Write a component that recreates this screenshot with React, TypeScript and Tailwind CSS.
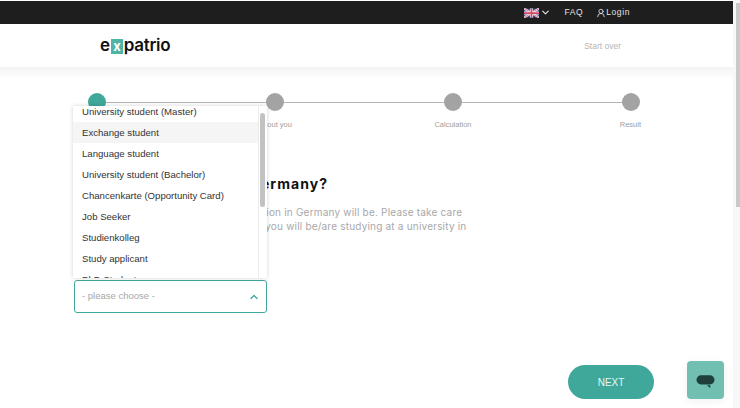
import React from 'react';
import { ChevronDown, ChevronUp, UserRound } from 'lucide-react';

const options = [
  'University student (Master)',
  'Exchange student',
  'Language student',
  'University student (Bachelor)',
  'Chancenkarte (Opportunity Card)',
  'Job Seeker',
  'Studienkolleg',
  'Study applicant',
  'PhD Student',
];

const steps = ['Your status', 'About you', 'Calculation', 'Result'];

const UkFlag = () => (
  <svg viewBox="0 0 60 36" className="h-[10px] w-[15px]">
    <rect width="60" height="36" fill="#3b4a8c" />
    <path d="M0 0L60 36M60 0L0 36" stroke="#f4f4f4" strokeWidth="8" />
    <path d="M0 0L60 36M60 0L0 36" stroke="#d2476a" strokeWidth="3" />
    <path d="M30 0V36M0 18H60" stroke="#f4f4f4" strokeWidth="12" />
    <path d="M30 0V36M0 18H60" stroke="#d2476a" strokeWidth="7" />
  </svg>
);

const App = () => {
  return (
    <div className="flex h-[408px] w-[740px] overflow-hidden bg-white font-['Liberation_Sans',sans-serif]">
      <div className="relative flex w-[733px] flex-col">
        <div className="mt-px flex h-[23px] shrink-0 items-center justify-end bg-[#1e1e1e] pr-[103px] text-[8.5px] tracking-[0.6px] text-[#e4e4e4]">
          <UkFlag />
          <ChevronDown className="ml-[1px] h-[11px] w-[11px]" strokeWidth={2.5} />
          <span className="ml-[13px]">FAQ</span>
          <UserRound className="ml-[13px] h-[10px] w-[10px]" strokeWidth={2} />
          <span>Login</span>
        </div>

        <header className="flex h-[43px] shrink-0 items-center justify-between pl-[100px] pr-[112px]">
          <div className="flex items-center font-['Inter',sans-serif] text-[17px] font-semibold leading-none tracking-[-0.3px] text-[#111]">
            <span>e</span>
            <span className="mx-px mt-[2px] flex h-[15px] w-[12px] items-center justify-center bg-[#4fb3a5] text-[13px] font-bold text-white">x</span>
            <span>patrio</span>
          </div>
          <span className="pt-[2px] text-[8.5px] text-[#b5b5b5]">Start over</span>
        </header>

        <div className="h-[13px] shrink-0 bg-gradient-to-b from-[#f4f4f4] to-white" />

        <main className="relative flex min-h-0 flex-1 flex-col pl-[74px] pr-[92px]">
          <div className="relative mt-[13px] h-[18px] shrink-0 pr-px">
            <div className="absolute left-[23px] right-[10px] top-[9px] h-[1px] bg-[#b5b5b5]" />
            <div className="relative flex justify-between pl-[14px]">
              {steps.map((s, i) => (
                <div key={s} className={`h-[18px] w-[18px] rounded-full ${i === 0 ? 'bg-[#3fa89a]' : 'bg-[#a3a3a3]'}`} />
              ))}
            </div>
          </div>
          <div className="mt-[7px] flex h-[14px] shrink-0 gap-[132px] text-[7.5px] leading-[14px] text-[#a0a0a0]">
            {steps.slice(0, 3).map(s => (
              <span key={s} className="w-[46px] text-center">{s}</span>
            ))}
            <span className="ml-auto">{steps[3]}</span>
          </div>

          <h1 className="mt-[42px] shrink-0 font-['Inter',sans-serif] text-[14px] font-bold leading-[20px] tracking-[1.05px] text-[#111]">What is your status in Germany?</h1>
          <p className="mt-[11px] shrink-0 whitespace-nowrap font-['Inter',sans-serif] text-[10px] leading-[14px] tracking-[0.2px] text-[#a8a8a8]">
            Please tell us what your type of admission in Germany will be. Please take care<br />
            to select University student only when you will be/are studying at a university in<br />
            Germany.
          </p>

          <button className="mt-[33px] flex h-[33px] w-[193px] shrink-0 items-center justify-between rounded-[3px] border-[1.5px] border-[#3fa89a] pl-[7px] pr-[6px] text-[9.5px] text-[#a8a8a8]">
            - please choose -
            <ChevronUp className="h-[12px] w-[12px] text-[#3fa89a]" strokeWidth={2.5} />
          </button>

          <div className="mt-[52px] flex shrink-0 justify-end">
            <button className="mr-[-13px] h-[34px] w-[86px] rounded-full bg-[#3fa89a] text-[10px] text-[#e8f7f4]">NEXT</button>
          </div>

          <div className="absolute left-[73px] top-[26px] h-[172px] w-[194px] overflow-hidden bg-white shadow-[0_0_4px_rgba(0,0,0,0.18)]">
            <ul className="mt-[-5px] text-[9.6px] leading-[21px] text-[#333]">
              {options.map((o, i) => (
                <li key={o} className={`h-[21px] pl-[9px] ${i === 1 ? 'bg-[#f5f5f5]' : ''}`}>{o}</li>
              ))}
            </ul>
            <div className="absolute bottom-0 right-0 top-0 w-[9px] border-l border-[#ececec] bg-white">
              <div className="ml-[1px] mt-[7px] h-[94px] w-[5px] rounded-full bg-[#c2c2c2]" />
            </div>
          </div>
        </main>

        <div className="absolute left-[687px] top-[361px] flex h-[38px] w-[37px] items-center justify-center rounded-[4px] bg-[#70bfb0] shadow-[0_2px_10px_rgba(0,0,0,0.06)]">
          <svg viewBox="0 0 20 14" className="mt-[4px] h-[14px] w-[19px]">
            <rect x="0.5" y="0" width="19" height="9.5" rx="4.75" fill="#1f3f3c" />
            <path d="M11.5 10.5L15 10.5L15 13.5Z" fill="#1f3f3c" />
          </svg>
        </div>
      </div>
      <div className="flex h-full w-[7px] justify-end bg-[#f7f7f7] pt-[3px]">
        <div className="h-[204px] w-[4px] bg-[#c9c9c9]" />
      </div>
    </div>
  );
};

export default App;
